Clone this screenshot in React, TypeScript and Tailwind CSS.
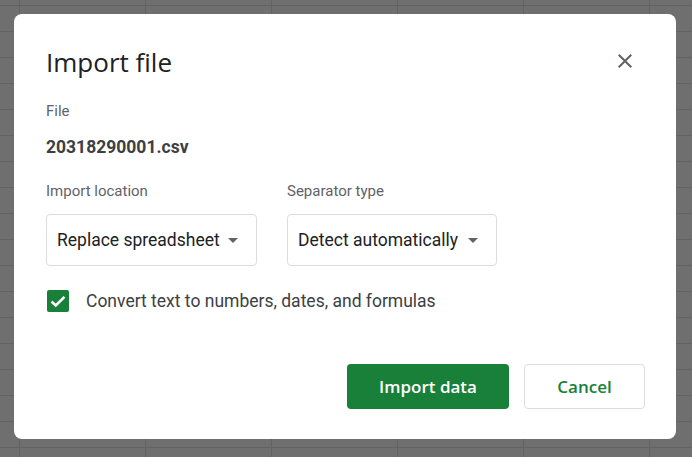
import React from "react";

function CloseIcon() {
  return (
    <svg width="24" height="24" viewBox="0 0 24 24" className="fill-[#5f6368]">
      <path d="M19 6.41L17.59 5 12 10.59 6.41 5 5 6.41 10.59 12 5 17.59 6.41 19 12 13.41 17.59 19 19 17.59 13.41 12z" />
    </svg>
  );
}

function Caret() {
  return (
    <svg width="10" height="5" viewBox="0 0 10 5" className="fill-[#5f6368]">
      <path d="M0 0L5 5L10 0z" />
    </svg>
  );
}

function Select({ label, value, width }: { label: string; value: string; width: string }) {
  return (
    <div className="flex flex-col">
      <div className="text-[15px] leading-[20px] text-[#5f6368]">{label}</div>
      <div
        className={`mt-[13px] h-[52px] ${width} border border-[#dadce0] rounded-[4px] flex items-center justify-between pl-[10px] pr-[18px]`}
      >
        <span className="text-[17.5px] text-[#202124]">{value}</span>
        <Caret />
      </div>
    </div>
  );
}

export default function App() {
  return (
    <div
      className="w-[692px] h-[457px] overflow-hidden p-[14px] bg-[#6f6f6f] bg-[linear-gradient(to_right,#636363_1px,transparent_1px),linear-gradient(to_bottom,#636363_1px,transparent_1px)] bg-[size:126px_26px] bg-[position:19px_5px]"
      style={{ fontFamily: "Roboto, 'Liberation Sans', sans-serif" }}
    >
      <div className="w-[662px] h-[425px] bg-white rounded-[8px] pl-[32px] pr-[31px] pt-[32px] flex flex-col">
        <div className="flex items-start justify-between">
          <h1
            className="text-[26px] leading-[32px] text-[#202124] font-normal"
            style={{ fontFamily: "'Open Sans', Roboto, sans-serif" }}
          >
            Import file
          </h1>
          <button className="mt-[3px] mr-[8px] w-[24px] h-[24px] flex items-center justify-center">
            <CloseIcon />
          </button>
        </div>
        <div className="mt-[23px] text-[15px] leading-[20px] text-[#5f6368]">File</div>
        <div className="mt-[14px] text-[17.5px] leading-[24px] font-bold text-[#3c4043]">20318290001.csv</div>
        <div className="mt-[22px] flex gap-[30px]">
          <Select label="Import location" value="Replace spreadsheet" width="w-[211px]" />
          <Select label="Separator type" value="Detect automatically" width="w-[210px]" />
        </div>
        <div className="mt-[22px] flex items-center">
          <div className="ml-[1px] w-[22px] h-[22px] rounded-[2px] bg-[#188038] flex items-center justify-center">
            <svg width="22" height="22" viewBox="0 0 22 22" fill="none" className="stroke-white">
              <polyline points="4.5,11.5 8.8,15.5 17.5,6.8" strokeWidth="2.6" />
            </svg>
          </div>
          <span className="ml-[17px] text-[17.5px] text-[#3c4043]">Convert text to numbers, dates, and formulas</span>
        </div>
        <div
          className="mt-auto mb-[30px] flex justify-end gap-[15px]"
          style={{ fontFamily: "'Open Sans', Roboto, sans-serif" }}
        >
          <button className="w-[162px] h-[45px] rounded-[4px] bg-[#188038] text-white text-[17px] font-semibold">
            Import data
          </button>
          <button className="w-[121px] h-[45px] rounded-[4px] border border-[#dadce0] bg-white text-[#188038] text-[17px] font-semibold">
            Cancel
          </button>
        </div>
      </div>
    </div>
  );
}
